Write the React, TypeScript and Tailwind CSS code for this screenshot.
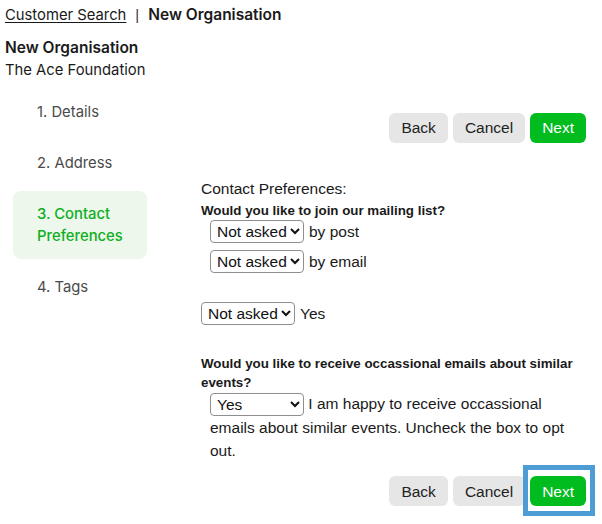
import { useState } from "react";

const steps = [
  { id: 1, label: "1. Details" },
  { id: 2, label: "2. Address" },
  { id: 3, label: "3. Contact Preferences" },
  { id: 4, label: "4. Tags" },
];

const prefOptions = ["Not asked", "Yes", "No"];

const PrefSelect = ({ value }: { value: string }) => {
  const [current, setCurrent] = useState(value);
  return (
    <select
      value={current}
      onChange={(e) => setCurrent(e.target.value)}
      className="h-[23px] pl-[2px] pr-0 border border-[#8f8f8f] rounded-[4px] bg-white text-[15.5px] text-[#111] align-middle"
    >
      {prefOptions.map((o) => (
        <option key={o}>{o}</option>
      ))}
    </select>
  );
};

const WizardButtons = ({ highlight }: { highlight?: boolean }) => (
  <div className="flex justify-end gap-[5px] text-[15.5px]">
    <button className="h-[30px] px-[12px] rounded-[6px] bg-[#e6e6e6] text-[#222]">Back</button>
    <button className="h-[30px] px-[12px] rounded-[6px] bg-[#e6e6e6] text-[#222]">Cancel</button>
    <div className="relative">
      <button className="h-[30px] px-[12px] rounded-[6px] bg-[#01bc1e] text-white">Next</button>
      {highlight && (
        <span className="absolute -left-[7px] -top-[11px] -right-[9px] -bottom-[10px] border-[5px] border-[#4d9dd4] pointer-events-none" />
      )}
    </div>
  </div>
);

export default function App() {
  const active = 3;

  return (
    <div className="w-[602px] h-[524px] bg-white text-[#1a1a1a] font-['Inter',sans-serif] text-[14.8px] overflow-hidden">
      {/* Breadcrumb */}
      <div className="flex items-center px-[5px] pt-[4px] leading-[22px]">
        <a href="#" className="underline underline-offset-2">Customer Search</a>
        <span className="mx-[9px] font-['Liberation_Sans',sans-serif] text-[#333]">|</span>
        <span className="font-semibold text-[15.5px]">New Organisation</span>
      </div>

      {/* Record header */}
      <div className="px-[5px] mt-[11px] leading-[22px]">
        <div className="font-semibold text-[15.5px]">New Organisation</div>
        <div>The Ace Foundation</div>
      </div>

      <div className="flex mt-[8px]">
        {/* Step list */}
        <aside className="ml-[13px] w-[134px] flex flex-col gap-[5px]">
          {steps.map((s) => (
            <div
              key={s.id}
              className={
                s.id === active
                  ? "px-[24px] py-[12px] leading-[22px] rounded-[8px] bg-[#edf7ec] text-[#0fb01f] font-medium"
                  : "px-[24px] py-[12px] leading-[22px] text-[#4a4a4a]"
              }
            >
              {s.label}
            </div>
          ))}
        </aside>

        {/* Step form */}
        <main className="flex-1 ml-[54px] pr-[16px] pt-[24px] font-['Liberation_Sans',Arial,sans-serif] text-[15.5px]">
          <WizardButtons />

          <p className="mt-[37px] leading-[18px]">Contact Preferences:</p>
          <p className="mt-[4px] text-[13.33px] font-bold leading-[18px]">Would you like to join our mailing list?</p>
          <div className="pl-[9px] flex flex-col gap-[7px]">
            <label className="flex items-center gap-[5px]">
              <PrefSelect value="Not asked" />
              <span>by post</span>
            </label>
            <label className="flex items-center gap-[5px]">
              <PrefSelect value="Not asked" />
              <span>by email</span>
            </label>
          </div>
          <label className="mt-[28px] flex items-center gap-[5px]">
            <PrefSelect value="Not asked" />
            <span>Yes</span>
          </label>

          <p className="mt-[29px] text-[13.33px] font-bold leading-[19px]">
            Would you like to receive occassional emails about similar events?
          </p>
          <p className="pl-[9px] leading-[23px]">
            <PrefSelect value="Yes" /> I am happy to receive occassional emails about similar events. Uncheck the box to opt out.
          </p>

          <div className="mt-[14px]">
            <WizardButtons highlight />
          </div>
        </main>
      </div>
    </div>
  );
}
